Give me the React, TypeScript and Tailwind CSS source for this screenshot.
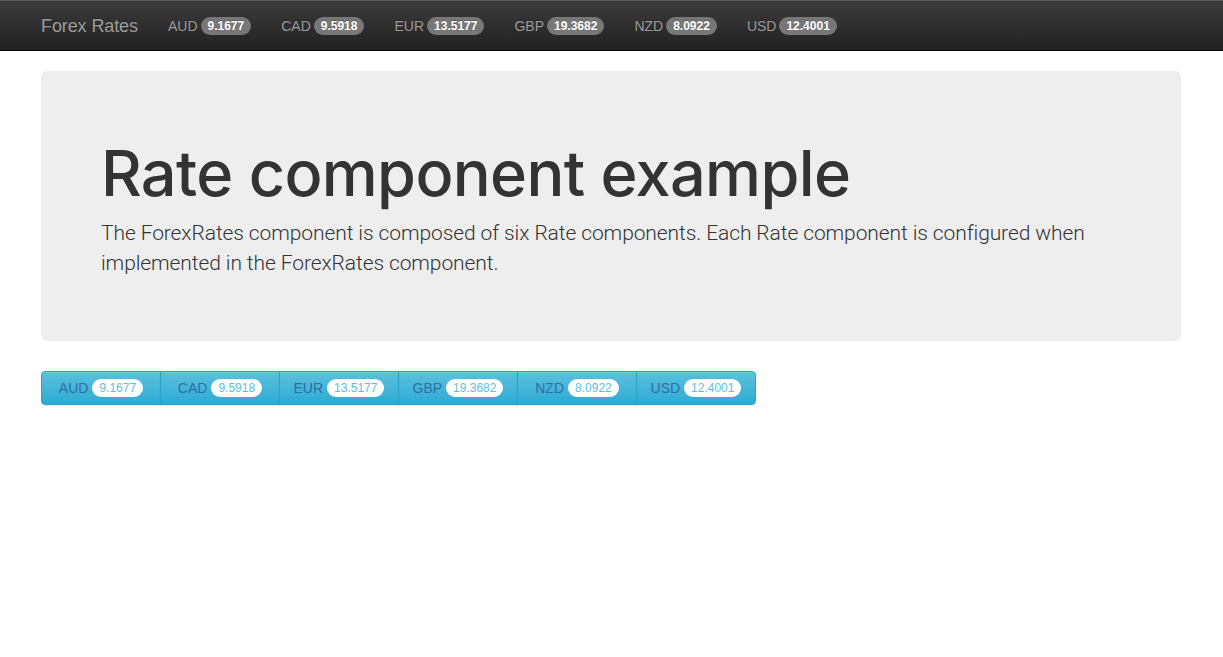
const rates = [
  { code: "AUD", value: "9.1677" },
  { code: "CAD", value: "9.5918" },
  { code: "EUR", value: "13.5177" },
  { code: "GBP", value: "19.3682" },
  { code: "NZD", value: "8.0922" },
  { code: "USD", value: "12.4001" },
];

function NavRate({ code, value }: { code: string; value: string }) {
  return (
    <span className="flex items-center px-[15px] text-[14px] leading-5 text-[#9d9d9d] [text-shadow:0_-1px_0_rgba(0,0,0,0.25)]">
      {code}
      <span className="ml-[3px] rounded-[10px] bg-[#777] px-[7px] py-[3px] text-[12px] font-bold leading-[12px] text-white">
        {value}
      </span>
    </span>
  );
}

function RateButton({
  code,
  value,
  first,
  last,
}: {
  code: string;
  value: string;
  first: boolean;
  last: boolean;
}) {
  return (
    <button
      className={`flex h-[34px] w-[120px] items-center justify-center border border-[#28a4c9] bg-gradient-to-b from-[#5bc0de] to-[#2aabd2] text-[14px] leading-5 text-[#2b6fa5] shadow-[inset_0_1px_0_rgba(255,255,255,0.15),0_1px_1px_rgba(0,0,0,0.075)] ${
        first ? "rounded-l-[4px]" : "-ml-px"
      } ${last ? "rounded-r-[4px]" : ""}`}
    >
      {code}
      <span className="ml-[4px] rounded-[10px] bg-white px-[7px] py-[3px] text-[12px] leading-[12px] text-[#5bc0de]">
        {value}
      </span>
    </button>
  );
}

export default function App() {
  return (
    <div className="min-h-[657px] bg-white font-['Liberation_Sans',Arial,sans-serif] text-[#333]">
      <nav className="h-[51px] border-b border-[#080808] bg-gradient-to-b from-[#3c3c3c] to-[#222] shadow-[inset_0_1px_0_rgba(255,255,255,0.15)]">
        <div className="ml-[26px] flex h-[50px] w-[1170px] items-center px-[15px] pt-[2px]">
          <span className="pr-[15px] text-[18px] leading-5 tracking-[-0.1px] text-[#9d9d9d] [text-shadow:0_-1px_0_rgba(0,0,0,0.25)]">
            Forex Rates
          </span>
          {rates.map((r) => (
            <NavRate key={r.code} code={r.code} value={r.value} />
          ))}
        </div>
      </nav>

      <div className="ml-[26px] w-[1170px] px-[15px]">
        <div className="mt-5 mb-[30px] rounded-[6px] bg-[#eee] px-[60px] py-[48px]">
          <h1 className="mt-5 mb-[10px] font-['Inter',sans-serif] text-[63px] leading-[1.1] font-medium tracking-[-0.65px]">
            Rate component example
          </h1>
          <p className="mb-[15px] font-['Roboto',sans-serif] text-[21px] leading-[30px] font-light tracking-[-0.1px]">
            The ForexRates component is composed of six Rate components. Each Rate component is configured when
            implemented in the ForexRates component.
          </p>
        </div>

        <div className="flex">
          {rates.map((r, i) => (
            <RateButton
              key={r.code}
              code={r.code}
              value={r.value}
              first={i === 0}
              last={i === rates.length - 1}
            />
          ))}
        </div>
      </div>
    </div>
  );
}
